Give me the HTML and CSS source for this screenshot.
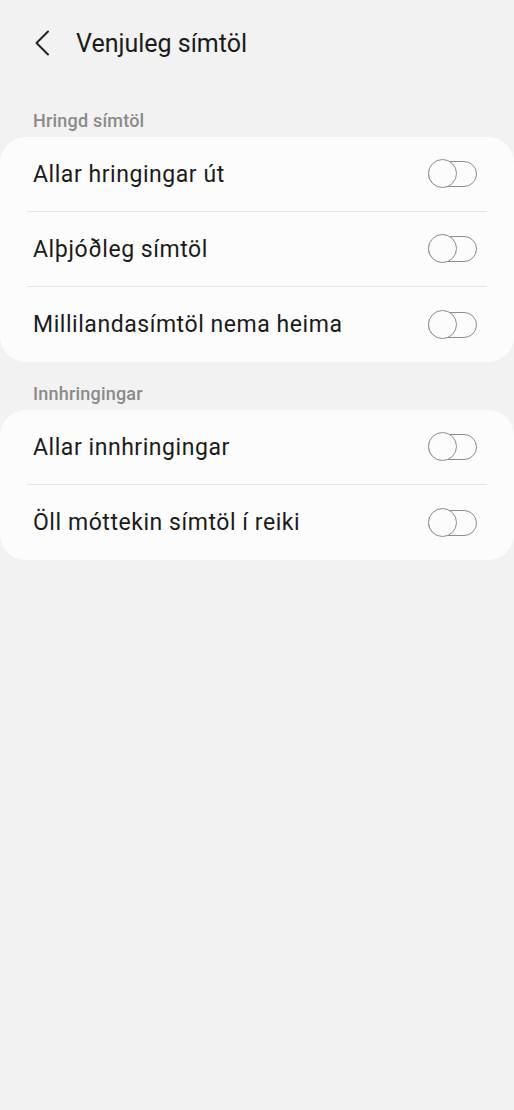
FILE: index.html
```html
<!DOCTYPE html>
<html>
<head>
  <meta charset="UTF-8">
  <title>Venjuleg símtöl</title>
  <link rel="stylesheet" href="styles.css">
</head>
<body>
  <div class="header">
    <span class="back">
      <svg width="16" height="26" viewBox="0 0 16 26"><path d="M14 1.5 L2.5 13 L14 24.5" fill="none" stroke="#222" stroke-width="2" stroke-linecap="round" stroke-linejoin="round"/></svg>
    </span>
    <h1>Venjuleg símtöl</h1>
  </div>

  <div class="section-label first">Hringd símtöl</div>
  <div class="card">
    <div class="row">
      <span>Allar hringingar út</span>
      <span class="switch"></span>
    </div>
    <div class="row">
      <span>Alþjóðleg símtöl</span>
      <span class="switch"></span>
    </div>
    <div class="row">
      <span>Millilandasímtöl nema heima</span>
      <span class="switch"></span>
    </div>
  </div>

  <div class="section-label">Innhringingar</div>
  <div class="card">
    <div class="row">
      <span>Allar innhringingar</span>
      <span class="switch"></span>
    </div>
    <div class="row">
      <span>Öll móttekin símtöl í reiki</span>
      <span class="switch"></span>
    </div>
  </div>
</body>
</html>
```

FILE: styles.css
```css
body {
  margin: 0;
  background: #f2f2f2;
  font-family: Roboto, "Liberation Sans", sans-serif;
  color: #1b1b1b;
}
.header {
  display: flex;
  align-items: center;
  height: 86px;
  padding-left: 34px;
}
.back {
  display: flex;
  width: 42px;
}
.header h1 {
  margin: 0;
  font-size: 25px;
  font-weight: 400;
}
.section-label {
  padding: 22px 33px 6px;
  height: 20px;
  line-height: 20px;
  font-size: 18px;
  font-weight: 500;
  letter-spacing: 0.2px;
  color: #8a8a8a;
}
.section-label.first {
  padding-top: 25px;
}
.card {
  background: #fcfcfc;
  border-radius: 26px;
}
.row {
  display: flex;
  align-items: center;
  justify-content: space-between;
  height: 75px;
  margin: 0 27px;
  padding: 0 36px 0 6px;
  font-size: 23px;
  letter-spacing: 0.55px;
  border-bottom: 1px solid #e6e6e6;
  box-sizing: border-box;
}
.row:last-child {
  border-bottom: none;
}
.switch {
  position: relative;
  width: 49px;
  height: 26px;
  border: 1.5px solid #8c8c8c;
  border-radius: 14px;
  box-sizing: border-box;
  margin-right: -26px;
}
.switch::before {
  content: "";
  position: absolute;
  left: -1.5px;
  top: -3px;
  width: 29px;
  height: 29px;
  border: 1.5px solid #8c8c8c;
  border-radius: 50%;
  background: #fcfcfc;
  box-sizing: border-box;
}
```
